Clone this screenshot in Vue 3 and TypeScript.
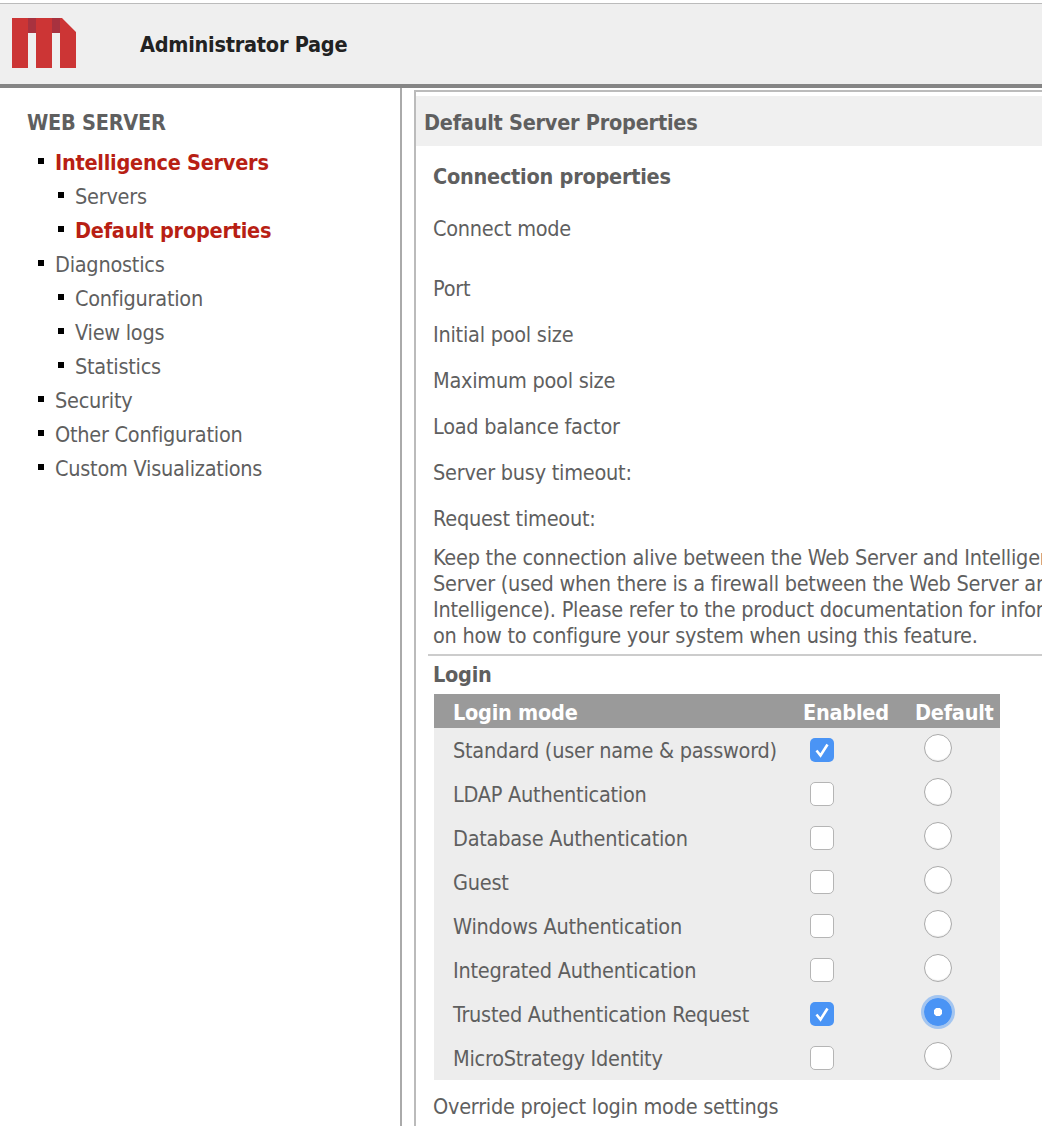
<script setup lang="ts">
interface NavItem {
  label: string;
  sub?: boolean;
  active?: boolean;
}

interface LoginMode {
  label: string;
  enabled: boolean;
  isDefault: boolean;
}

const navItems: NavItem[] = [
  { label: "Intelligence Servers", active: true },
  { label: "Servers", sub: true },
  { label: "Default properties", sub: true, active: true },
  { label: "Diagnostics" },
  { label: "Configuration", sub: true },
  { label: "View logs", sub: true },
  { label: "Statistics", sub: true },
  { label: "Security" },
  { label: "Other Configuration" },
  { label: "Custom Visualizations" },
];

const fields = [
  "Port",
  "Initial pool size",
  "Maximum pool size",
  "Load balance factor",
  "Server busy timeout:",
  "Request timeout:",
];

const loginModes: LoginMode[] = [
  { label: "Standard (user name & password)", enabled: true, isDefault: false },
  { label: "LDAP Authentication", enabled: false, isDefault: false },
  { label: "Database Authentication", enabled: false, isDefault: false },
  { label: "Guest", enabled: false, isDefault: false },
  { label: "Windows Authentication", enabled: false, isDefault: false },
  { label: "Integrated Authentication", enabled: false, isDefault: false },
  { label: "Trusted Authentication Request", enabled: true, isDefault: true },
  { label: "MicroStrategy Identity", enabled: false, isDefault: false },
];
</script>

<template>
  <div class="page">
    <header class="topbar">
      <svg class="logo" width="64" height="50" viewBox="0 0 64 50">
        <path d="M0 0H50L64 14V50H48V15H40V50H24V15H16V50H0Z" fill="#cc3535" />
        <rect x="16" y="0" width="8" height="15" fill="#a8323f" />
        <rect x="40" y="0" width="8" height="15" fill="#a8323f" />
      </svg>
      <h1 class="page-title">Administrator Page</h1>
    </header>

    <div class="body-row">
      <nav class="sidebar">
        <div class="nav-heading">WEB SERVER</div>
        <ul class="nav-list">
          <li
            v-for="item in navItems"
            :key="item.label"
            class="nav-item"
            :class="{ sub: item.sub, active: item.active }"
          >
            {{ item.label }}
          </li>
        </ul>
      </nav>

      <main class="content">
        <div class="panel">
          <div class="panel-title">Default Server Properties</div>
          <div class="panel-body">
            <div class="section-title">Connection properties</div>
            <div class="connect-mode">Connect mode</div>
            <div v-for="field in fields" :key="field" class="field">{{ field }}</div>
            <p class="keep-alive">
              Keep the connection alive between the Web Server and Intelligence<br />
              Server (used when there is a firewall between the Web Server and<br />
              Intelligence). Please refer to the product documentation for information<br />
              on how to configure your system when using this feature.
            </p>
            <div class="divider"></div>
            <div class="login-title">Login</div>
            <div class="login-table">
              <div class="login-head">
                <span>Login mode</span>
                <span class="head-center">Enabled</span>
                <span class="head-center">Default</span>
              </div>
              <div v-for="mode in loginModes" :key="mode.label" class="login-row">
                <span>{{ mode.label }}</span>
                <span class="cell-center">
                  <span class="check" :class="{ on: mode.enabled }">
                    <svg v-if="mode.enabled" width="24" height="24" viewBox="0 0 24 24">
                      <path d="M6.5 12.5L10.5 17.5L17.5 6.5" fill="none" stroke="#fff" stroke-width="2.6" />
                    </svg>
                  </span>
                </span>
                <span class="cell-center">
                  <span class="radio" :class="{ on: mode.isDefault }"></span>
                </span>
              </div>
            </div>
            <div class="override">Override project login mode settings</div>
          </div>
        </div>
      </main>
    </div>
  </div>
</template>

<style>
html,
body {
  margin: 0;
  background: #fff;
  overflow: hidden;
}
</style>

<style scoped>
.page {
  width: 1042px;
  height: 1126px;
  overflow: hidden;
  padding-top: 3px;
  box-sizing: border-box;
  font-family: "DejaVu Sans Condensed", "DejaVu Sans", sans-serif;
  font-stretch: condensed;
  font-size: 21.5px;
  letter-spacing: -0.25px;
  color: #5f5f5f;
  background: #fff;
}

.topbar {
  height: 85px;
  box-sizing: border-box;
  display: flex;
  align-items: center;
  background: #efefef;
  border-top: 1px solid #bbb;
  border-bottom: 4px solid #858585;
  padding-left: 12px;
}

.logo {
  margin-top: -2px;
  flex-shrink: 0;
}

.page-title {
  margin: 0 0 0 64px;
  font-size: 21.5px;
  font-weight: bold;
  letter-spacing: -0.25px;
  color: #222;
}

.body-row {
  display: flex;
  height: 1038px;
}

.sidebar {
  width: 400px;
  flex-shrink: 0;
  box-sizing: border-box;
  padding: 18px 0 0 27px;
}

.nav-heading {
  font-weight: bold;
  line-height: 34px;
}

.nav-list {
  list-style: none;
  margin: 6px 0 0;
  padding: 0;
}

.nav-item {
  position: relative;
  line-height: 34px;
  padding-left: 28px;
}

.nav-item::before {
  content: "";
  position: absolute;
  left: 11px;
  top: 12px;
  width: 6px;
  height: 6px;
  background: #000;
}

.nav-item.sub {
  padding-left: 48px;
}

.nav-item.sub::before {
  left: 31px;
}

.nav-item.active {
  color: #b81f14;
  font-weight: bold;
}

.content {
  flex: 1;
  min-width: 0;
  border-left: 2px solid #aaa;
  padding: 2px 0 0 12px;
}

.panel {
  width: 700px;
  border-left: 2px solid #bbb;
  border-top: 2px solid #bbb;
  height: 1100px;
}

.panel-title {
  height: 50px;
  margin-top: 4px;
  line-height: 54px;
  padding-left: 8px;
  background: #f0f0f0;
  font-weight: bold;
}

.panel-body {
  padding-left: 17px;
}

.section-title {
  font-weight: bold;
  line-height: 34px;
  margin-top: 14px;
}

.connect-mode {
  line-height: 34px;
  margin-top: 18px;
  margin-bottom: 26px;
}

.field {
  line-height: 34px;
  margin-bottom: 12px;
}

.keep-alive {
  margin: -3px 0 0;
  line-height: 26px;
  white-space: nowrap;
}

.divider {
  height: 2px;
  background: #ccc;
  margin: 5px 0 0 -5px;
}

.login-title {
  font-weight: bold;
  line-height: 38px;
}

.login-table {
  width: 566px;
  margin-left: 1px;
  background: #ededed;
}

.login-head,
.login-row {
  display: grid;
  grid-template-columns: 351px 112px 84px;
  padding-left: 19px;
  box-sizing: border-box;
}

.login-head {
  height: 34px;
  line-height: 38px;
  background: #9a9a9a;
  color: #fff;
  font-weight: bold;
}

.head-center {
  white-space: nowrap;
  margin-left: -1px;
}

.login-row {
  height: 44px;
  align-items: center;
  white-space: nowrap;
}

.cell-center {
  display: flex;
  align-items: center;
}

.check {
  width: 24px;
  height: 24px;
  box-sizing: border-box;
  margin-left: 6px;
  border: 1px solid #b5b5b5;
  border-radius: 5px;
  background: #fff;
  display: block;
}

.check.on {
  border: none;
  background: #4a94f5;
}

.check svg {
  display: block;
}

.radio {
  width: 28px;
  height: 28px;
  box-sizing: border-box;
  margin: -4px 0 0 8px;
  border: 1px solid #aaa;
  border-radius: 50%;
  background: #fff;
  box-shadow: inset 0 -1px 1px rgba(0, 0, 0, 0.08);
  display: block;
}

.radio.on {
  border: none;
  background: radial-gradient(circle, #fff 0 4px, #4a94f5 4.5px);
  box-shadow: 0 0 0 3px rgba(74, 148, 245, 0.45);
}

.override {
  line-height: 34px;
  margin-top: 10px;
}
</style>
